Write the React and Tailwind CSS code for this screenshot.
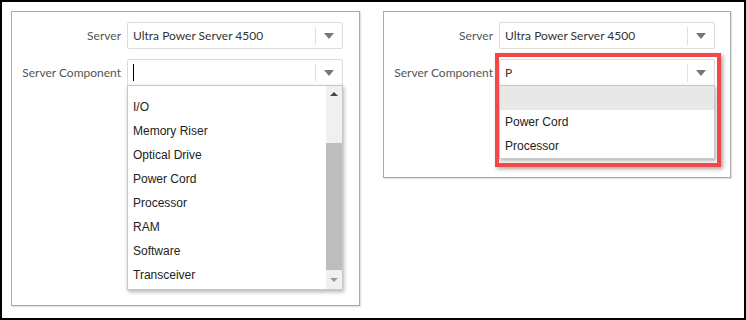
import React from "react";

const labelFont = { fontFamily: 'Lato, "Open Sans", sans-serif' };

const Arrow = () => (
  <svg width="10" height="6" viewBox="0 0 10 6" className="block">
    <polygon points="0,0 10,0 5,6" fill="#777" />
  </svg>
);

const SmallArrow = ({ up }) => (
  <svg width="8" height="4" viewBox="0 0 8 4" className="block">
    <polygon points={up ? "0,4 8,4 4,0" : "0,0 8,0 4,4"} fill={up ? "#444" : "#999"} />
  </svg>
);

const SelectBox = ({ value, caret }) => (
  <div className="flex h-[27px] w-[216px] items-center rounded-[2px] border border-[#dcdcdc] bg-white">
    <div
      className="flex flex-1 items-center pl-[5px] text-[12px] text-[#333]"
      style={labelFont}
    >
      {caret && <span className="h-[17px] w-px bg-black" />}
      {value}
    </div>
    <div className="h-[18px] w-px bg-[#e0e0e0]" />
    <div className="flex w-[26px] items-center justify-center">
      <Arrow />
    </div>
  </div>
);

const Row = ({ label, children }) => (
  <div className="flex items-center">
    <div
      className="w-[115px] whitespace-nowrap pr-[6px] text-right text-[12px] text-[#555]"
      style={labelFont}
    >
      {label}
    </div>
    {children}
  </div>
);

const Item = ({ text, active }) => (
  <div
    className={`flex h-6 items-center pl-[5px] text-[12px] text-[#222] ${active ? "bg-[#e8e8e8]" : ""}`}
    style={{ fontFamily: '"Liberation Sans", Arial, sans-serif' }}
  >
    {text}
  </div>
);

const items = ["I/O", "Memory Riser", "Optical Drive", "Power Cord", "Processor", "RAM", "Software", "Transceiver"];

export default function App() {
  return (
    <div className="flex h-[320px] w-[746px] items-start gap-[23px] border-2 border-black bg-white pl-[9px] pt-[9px]">
      {/* Left panel */}
      <div className="relative h-[295px] w-[349px] border border-[#aaa] pt-[10px] shadow-[1px_1px_1px_rgba(0,0,0,0.12)]">
        <div className="flex flex-col gap-[10px]">
          <Row label="Server">
            <SelectBox value="Ultra Power Server 4500" />
          </Row>
          <Row label="Server Component">
            <div className="relative">
              <SelectBox caret />
              <div className="absolute left-0 top-[26px] z-10 flex h-[205px] w-[216px] border border-[#c8c8c8] bg-white shadow-[1px_2px_4px_rgba(0,0,0,0.3)]">
                <div className="flex-1 pt-[9px]">
                  {items.map((t) => (
                    <Item key={t} text={t} />
                  ))}
                </div>
                <div className="flex w-[16px] flex-col bg-[#f0f0f0]">
                  <div className="flex h-[14px] items-center justify-center pt-[2px]">
                    <SmallArrow up />
                  </div>
                  <div className="mt-[43px] h-[127px] bg-[#bdbdbd]" />
                  <div className="flex flex-1 items-center justify-center">
                    <SmallArrow />
                  </div>
                </div>
              </div>
            </div>
          </Row>
        </div>
      </div>

      {/* Right panel */}
      <div className="relative h-[167px] w-[348px] border border-[#aaa] pt-[10px] shadow-[1px_1px_1px_rgba(0,0,0,0.12)]">
        <div className="flex flex-col gap-[10px]">
          <Row label="Server">
            <SelectBox value="Ultra Power Server 4500" />
          </Row>
          <Row label="Server Component">
            <div className="relative">
              <SelectBox value="P" />
              <div className="absolute left-0 top-[26px] z-10 w-[216px] border border-[#c8c8c8] bg-white shadow-[1px_2px_4px_rgba(0,0,0,0.3)]">
                <Item text="" active />
                <Item text="Power Cord" />
                <Item text="Processor" />
              </div>
              <div className="absolute left-[-4px] top-[-6px] z-20 h-[114px] w-[226px] border-4 border-[#f24848] shadow-[2px_2px_4px_rgba(0,0,0,0.35)]" />
            </div>
          </Row>
        </div>
      </div>
    </div>
  );
}
